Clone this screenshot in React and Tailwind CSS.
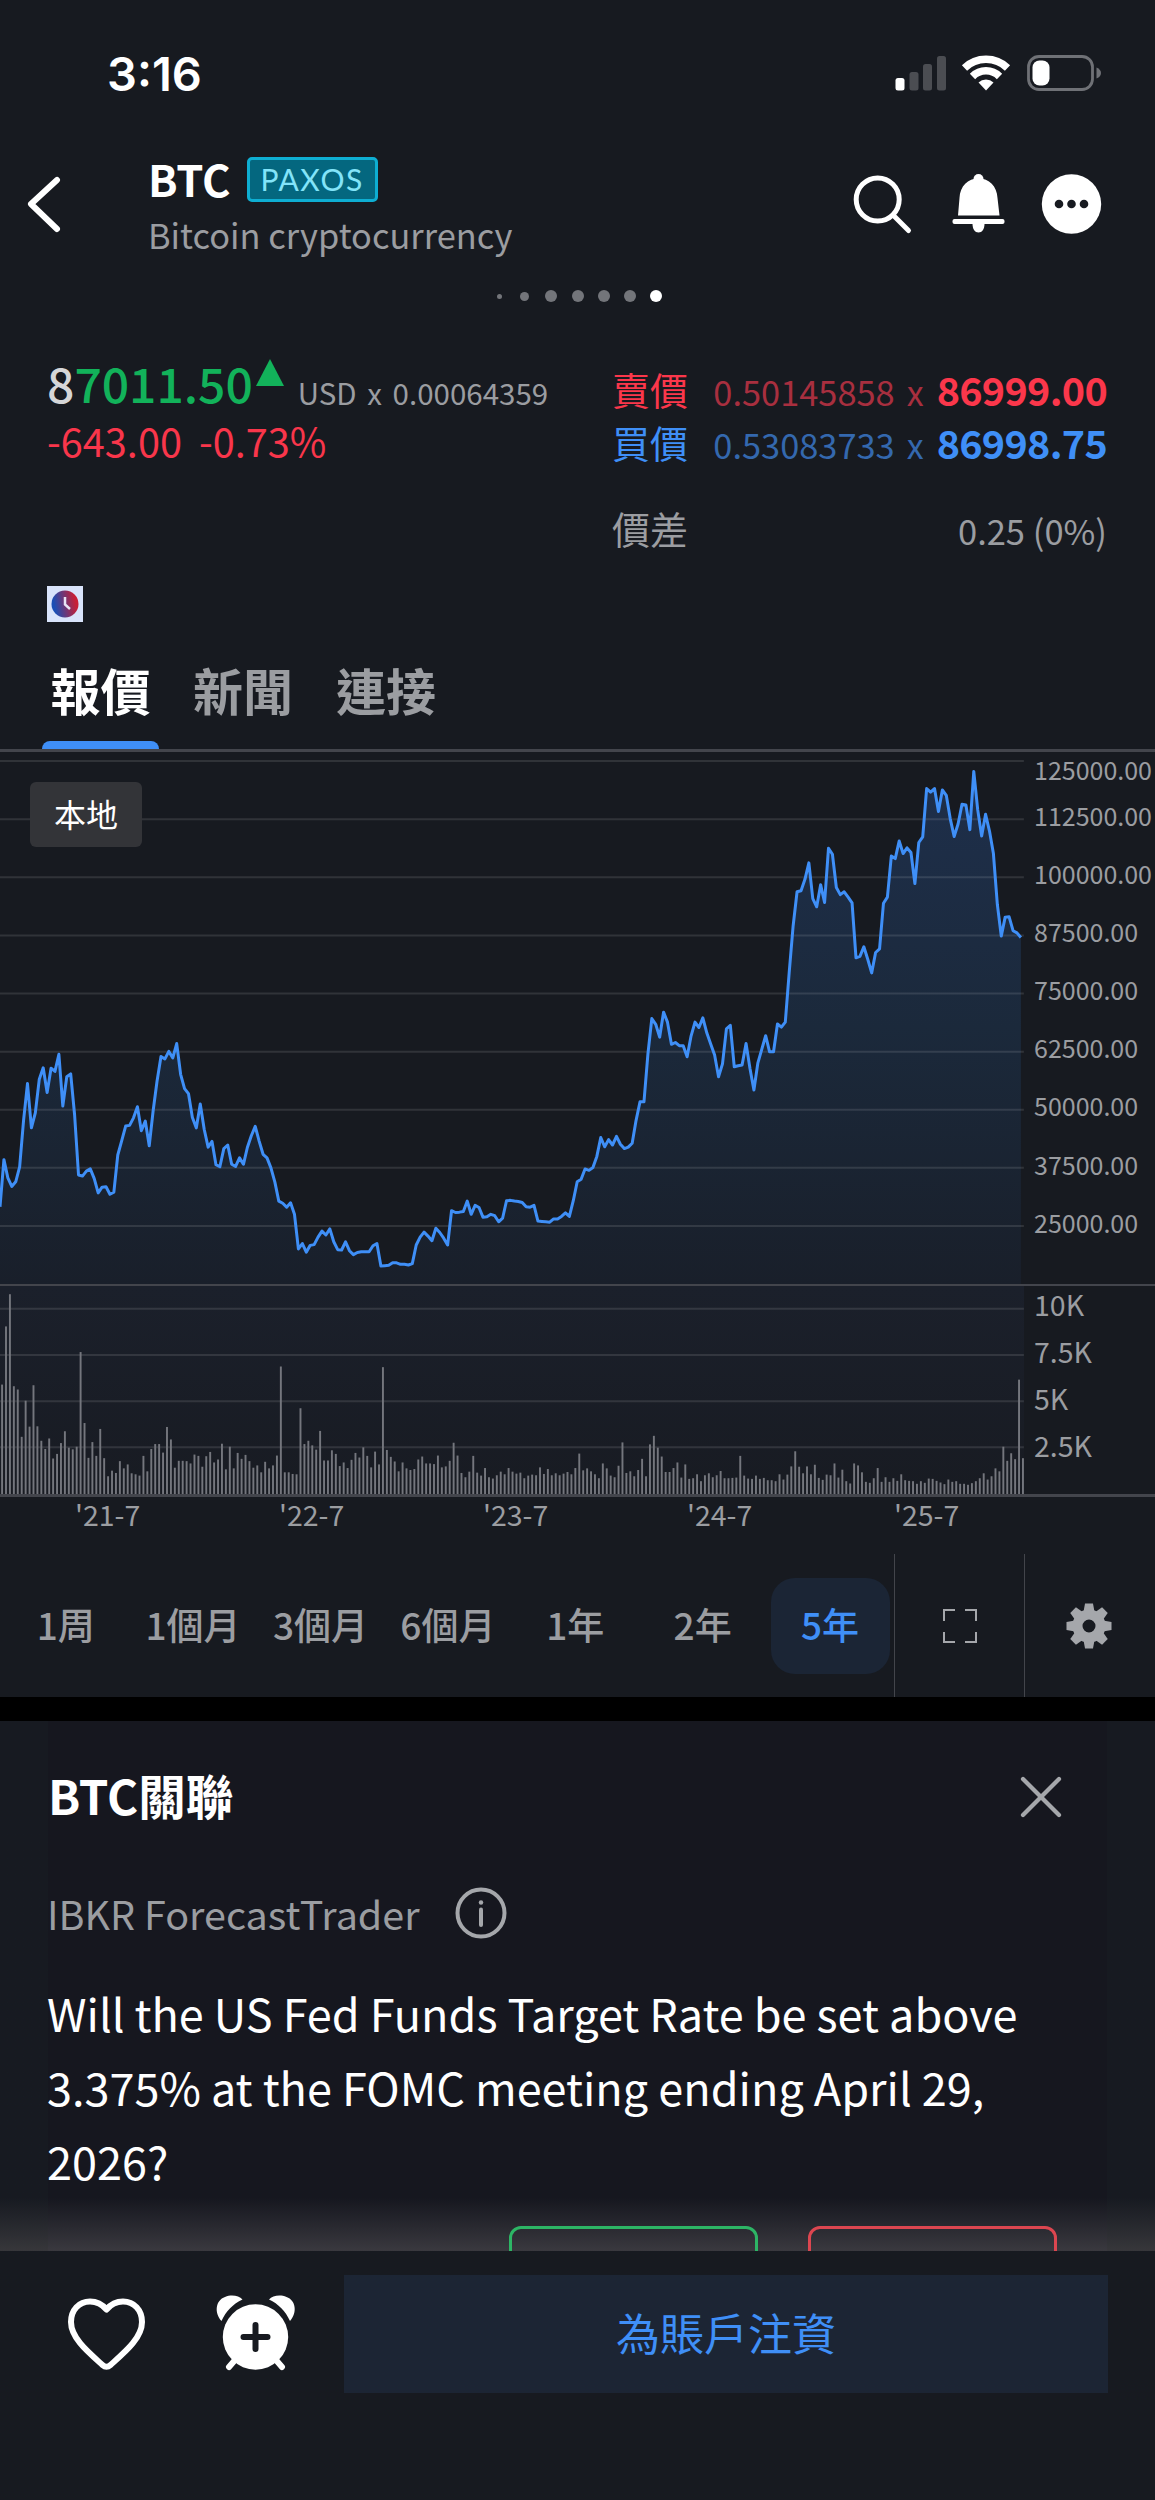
import { X } from 'lucide-react'

// weekly closes, in chart units (0 at the top of the plot)
const PRICE = [
  1307, 1175, 1226, 1250, 1237, 1195, 1065, 962, 1086, 1044, 950, 918, 987, 919, 928, 880, 1025, 943, 935, 1050,
  1218, 1221, 1207, 1201, 1228, 1268, 1252, 1251, 1272, 1266, 1162, 1122, 1081, 1079, 1058, 1027, 1094, 1067, 1136, 1038,
  955, 886, 893, 872, 890, 850, 936, 976, 990, 1057, 1086, 1019, 1090, 1140, 1124, 1189, 1195, 1144, 1134, 1188,
  1194, 1170, 1188, 1141, 1108, 1082, 1123, 1160, 1170, 1198, 1238, 1291, 1297, 1308, 1296, 1328, 1425, 1410, 1434, 1415,
  1413, 1392, 1375, 1386, 1369, 1405, 1427, 1428, 1405, 1430, 1441, 1435, 1433, 1433, 1433, 1416, 1410, 1473, 1472, 1471,
  1464, 1464, 1468, 1468, 1470, 1466, 1414, 1392, 1378, 1389, 1402, 1367, 1379, 1395, 1414, 1318, 1323, 1322, 1320, 1291,
  1328, 1303, 1309, 1336, 1335, 1328, 1332, 1349, 1339, 1290, 1289, 1291, 1292, 1295, 1307, 1308, 1303, 1347, 1348, 1349,
  1350, 1341, 1341, 1334, 1324, 1334, 1290, 1237, 1230, 1201, 1205, 1197, 1166, 1113, 1139, 1119, 1134, 1110, 1132, 1144,
  1140, 1129, 1065, 1013, 1013, 880, 780, 796, 832, 762, 790, 852, 847, 856, 856, 887, 829, 790, 805, 778,
  820, 851, 882, 943, 907, 809, 799, 915, 912, 910, 850, 920, 980, 905, 866, 828, 873, 873, 795, 804,
  790, 650, 520, 425, 422, 390, 344, 444, 467, 405, 455, 303, 320, 413, 433, 425, 440, 456, 610, 606,
  579, 614, 652, 595, 585, 457, 440, 325, 332, 283, 318, 302, 315, 402, 287, 271, 136, 146, 136, 200,
  140, 155, 220, 270, 235, 180, 182, 251, 88, 195, 269, 208, 255, 318, 460, 549, 496, 495, 534, 540, 553,
]

// top of each weekly volume bar, the baseline is at 678
const VOLUME = [
  345, 168, 70, 350, 360, 504, 394, 473, 347, 472, 516, 541, 509, 570, 556, 523, 487, 537, 542, 534,
  246, 462, 568, 520, 562, 480, 569, 624, 607, 614, 578, 600, 588, 615, 618, 622, 562, 609, 541, 526,
  526, 552, 474, 512, 598, 577, 577, 578, 585, 558, 562, 595, 563, 550, 582, 573, 525, 603, 534, 600,
  553, 571, 559, 578, 598, 591, 612, 580, 600, 591, 561, 290, 612, 612, 617, 618, 417, 526, 516, 530,
  543, 486, 576, 576, 545, 556, 593, 582, 599, 574, 553, 567, 536, 562, 597, 549, 588, 292, 544, 565,
  579, 609, 582, 600, 605, 602, 573, 564, 585, 585, 587, 561, 597, 594, 577, 522, 561, 614, 627, 610,
  562, 613, 622, 599, 627, 631, 621, 610, 618, 599, 610, 616, 613, 630, 622, 619, 621, 597, 617, 602,
  621, 615, 621, 616, 611, 618, 599, 555, 606, 600, 609, 618, 630, 585, 600, 622, 627, 592, 521, 614,
  609, 624, 605, 571, 624, 527, 501, 537, 564, 611, 611, 599, 582, 628, 588, 632, 630, 618, 639, 621,
  615, 627, 621, 608, 630, 630, 629, 628, 562, 622, 631, 632, 622, 632, 629, 636, 636, 639, 618, 634,
  619, 594, 548, 595, 615, 594, 618, 589, 629, 635, 619, 621, 585, 628, 604, 639, 646, 585, 591, 612,
  641, 644, 630, 599, 641, 627, 641, 630, 638, 618, 636, 638, 639, 647, 639, 644, 631, 632, 638, 643,
  648, 634, 641, 639, 647, 647, 650, 645, 639, 630, 615, 634, 624, 600, 609, 534, 577, 554, 572, 330, 569,
]

const PRICE_LABELS = ['112500.00', '100000.00', '87500.00', '75000.00', '62500.00', '50000.00', '37500.00', '25000.00']
const VOLUME_LABELS = ['10K', '7.5K', '5K', '2.5K']
const DATES = ["'21-7", "'22-7", "'23-7", "'24-7", "'25-7"]
const RANGES = ['1周', '1個月', '3個月', '6個月', '1年', '2年', '5年']

function StatusBar() {
  return (
    <div className="flex h-[146px] items-center justify-between pl-[107px] pr-[54px]">
      <span className="font-['Inter',sans-serif] text-[47px] font-semibold leading-none">3:16</span>
      <svg className="h-10 w-[206px]" viewBox="895 53 206 40" fill="#fff">
        <rect x="895.500" y="78" width="9" height="12.500" rx="2.500" />
        <g fill="#4b4d52">
          <rect x="909.500" y="72" width="9" height="18.500" rx="2.500" />
          <rect x="923" y="64" width="9" height="26.500" rx="2.500" />
          <rect x="937" y="56" width="9" height="34.500" rx="2.500" />
        </g>
        <g fill="none" stroke="#fff" strokeWidth="7.500">
          <path d="M964.500 68 A31 31 0 0 1 1007.500 68" />
          <path d="M972.500 76.500 A19 19 0 0 1 999.500 76.500" />
        </g>
        <path d="M986 90.500 L978.500 82.500 A11 11 0 0 1 993.500 82.500 Z" />
        <rect x="1028.500" y="56.500" width="64" height="33" rx="10.500" fill="none" stroke="#6f7176" strokeWidth="2.800" />
        <rect x="1032.500" y="60.500" width="17" height="25" rx="7" />
        <path d="M1096.500 67.500 q4.500 2 4.500 5.500 t-4.500 5.500 Z" fill="#6f7176" />
      </svg>
    </div>
  )
}

function Header() {
  return (
    <div className="flex h-[134px] pl-[27px] pr-[53px]">
      <svg className="mt-[29px] h-[60px] w-[36px]" viewBox="0 0 36 60" fill="none" stroke="#fff" strokeWidth="6" strokeLinecap="round" strokeLinejoin="round">
        <path d="M30 5 L4 29 L30 54" />
      </svg>
      <div className="ml-[85px] flex-1">
        <div className="mt-[8px] flex h-[50px] items-center">
          <span className="text-[43.5px] font-bold leading-[50px]">BTC</span>
          <span className="ml-4 flex h-[45px] w-[131px] items-center justify-center rounded-[5px] border-[3px] border-[#0eaed2] bg-[#04677f] font-['Lato',sans-serif] text-[30px] leading-none tracking-[1.5px] text-[#82e4f9]">
            PAXOS
          </span>
        </div>
        <p className="mt-[8px] text-[34.4px] leading-[44px] text-[#9b9da1]">Bitcoin cryptocurrency</p>
      </div>
      <svg className="mt-[28px] h-[62px] w-[250px]" viewBox="852 174 250 62">
        <g fill="none" stroke="#fff" strokeWidth="5" strokeLinecap="round">
          <circle cx="877.700" cy="199.500" r="21.500" />
          <path d="M893.500 215.500 L908.500 230.500" />
        </g>
        <g fill="#fff">
          <circle cx="978.500" cy="179" r="5" />
          <path d="M958 215.500 L959.500 198 C960 186 968 178.500 978.500 178.500 S997 186 997.500 198 L999.500 215.500 Z" />
          <rect x="952.500" y="219" width="52" height="5" rx="2" />
          <path d="M972.500 224 h12 c0 5 -2.500 8.500 -6 8.500 s-6 -3.500 -6 -8.500 Z" />
          <circle cx="1071.500" cy="204" r="29.700" />
        </g>
        <g fill="#171a20">
          <circle cx="1059" cy="204" r="4.300" />
          <circle cx="1071.500" cy="204" r="4.300" />
          <circle cx="1084" cy="204" r="4.300" />
        </g>
      </svg>
    </div>
  )
}

function PageDots() {
  return (
    <div className="flex h-8 items-center justify-center gap-[14.3px] pl-[4px] text-[#73757a]">
      <i className="mr-[4px] size-[5px] rounded-full bg-current" />
      <i className="mr-[2px] size-[9px] rounded-full bg-current" />
      <i className="size-3 rounded-full bg-current" />
      <i className="size-3 rounded-full bg-current" />
      <i className="size-3 rounded-full bg-current" />
      <i className="size-3 rounded-full bg-current" />
      <i className="size-3 rounded-full bg-white" />
    </div>
  )
}

function BidAsk({ label, size, price, color, dim }) {
  return (
    <div className={`flex h-[53px] items-center justify-between ${color}`}>
      <span className="text-[38px]">{label}</span>
      <span className="flex items-baseline">
        <span className={`text-[34.4px] ${dim}`}>{size}</span>
        <span className={`ml-3 text-[34px] ${dim}`}>x</span>
        <span className="ml-[13px] text-[39.5px] font-bold tracking-[-0.7px]">{price}</span>
      </span>
    </div>
  )
}

function Quote() {
  return (
    <div className="flex h-[274px] justify-between pl-[47px] pr-[48px] pt-[46px] leading-none">
      <div className="pt-[7px]">
        <div className="flex h-[58px] items-baseline">
          <span className="text-[48px] font-medium leading-[58px] text-[#12b25a]">
            <span className="text-[#d5d6d8]">8</span>7011.50
          </span>
          <svg className="ml-[3px] h-[27px] w-[28px] -translate-y-[17px]" viewBox="0 0 28 27">
            <path d="M14 0 L28 27 H0 Z" fill="#12b25a" />
          </svg>
          <span className="ml-[14px] translate-y-[2px] text-[29.5px] text-[#9b9da1] [word-spacing:4px]">USD x 0.00064359</span>
        </div>
        <p className="mt-1 flex gap-[17px] text-[39.7px] leading-[50px] text-[#f9364b]">
          <span>-643.00</span>
          <span>-0.73%</span>
        </p>
        <div className="mt-[121px] flex size-9 items-center justify-center bg-[#d9e4fb]">
          <svg className="size-7" viewBox="0 0 28 28">
            <defs>
              <linearGradient id="clock" x1="0" y1="0.600" x2="1" y2="0.400">
                <stop offset="0.100" stopColor="#1a4fb5" />
                <stop offset="0.900" stopColor="#c81e35" />
              </linearGradient>
            </defs>
            <circle cx="14" cy="14" r="13.500" fill="url(#clock)" />
            <path d="M14 7 V14.500 L19 19" fill="none" stroke="#e8e4f5" strokeWidth="2.500" />
          </svg>
        </div>
      </div>
      <div className="w-[495px] pt-[16px]">
        <BidAsk label="賣價" size="0.50145858" price="86999.00" color="text-[#fb374b]" dim="text-[#a82f3f]" />
        <BidAsk label="買價" size="0.53083733" price="86998.75" color="text-[#3f8ff7]" dim="text-[#3468ae]" />
        <div className="mt-[33px] flex h-[53px] items-center justify-between text-[#9b9da1]">
          <span className="text-[38px]">價差</span>
          <span className="mt-[6px] text-[34.5px]">0.25 (0%)</span>
        </div>
      </div>
    </div>
  )
}

function Tabs() {
  return (
    <div className="flex h-[112px] border-b-3 border-[#43454c] pl-[42px] text-[50px] font-bold leading-[80px] text-[#9b9da1]">
      <div className="flex w-[117px] flex-col justify-between text-center text-white">
        <span className="mt-[9px]">報價</span>
        <i className="h-2 rounded-t-[10px] bg-[#3f8ff7]" />
      </div>
      <span className="ml-[34px] mt-[9px]">新聞</span>
      <span className="ml-[43px] mt-[9px]">連接</span>
    </div>
  )
}

function PriceChart() {
  const points = PRICE.map((y, i) => `${(i * 10.615).toFixed(1)},${y}`).join(' ')
  return (
    <div className="relative flex h-[532px]">
      <svg className="h-full w-[1024px]" viewBox="0 33.6 2768.3 1489.6" preserveAspectRatio="none">
        <defs>
          <linearGradient id="area" x1="0" y1="0" x2="0" y2="1">
            <stop offset="0" stopColor="#1e2f4b" />
            <stop offset="0.500" stopColor="#1b293b" />
            <stop offset="1" stopColor="#191f2a" />
          </linearGradient>
        </defs>
        <polygon points={`0,1524 ${points} 2760,1524`} fill="url(#area)" />
        {[59, 222, 384.500, 547.500, 710, 873, 1035.500, 1198, 1361].map(y => (
          <path key={y} d={`M0 ${y} H2768`} stroke="#fff" strokeOpacity="0.11" strokeWidth="2" vectorEffect="non-scaling-stroke" />
        ))}
        <polyline points={points} fill="none" stroke="#3f8ff7" strokeWidth="3" strokeLinejoin="round" vectorEffect="non-scaling-stroke" />
      </svg>
      <div className="flex flex-col pl-[10px] text-[25px] text-[#9b9da1]">
        <span className="h-[35px] leading-[34px]">125000.00</span>
        {PRICE_LABELS.map(label => (
          <span key={label} className="h-[58.1px] leading-[57px]">{label}</span>
        ))}
      </div>
      <div className="absolute left-[30px] top-[30px] flex h-[65px] w-[112px] items-center justify-center rounded-md bg-[#333438] pb-1 text-[32px] leading-none">
        本地
      </div>
    </div>
  )
}

function VolumeChart() {
  return (
    <div className="flex h-[213px] border-b-[3px] border-t-2 border-[#43454c]">
      <svg className="h-full w-[1024px] bg-linear-to-b from-[#1b202b] to-[#181b22]" viewBox="0 45 2768.3 633" preserveAspectRatio="none">
        {[114, 255, 396, 536].map(y => (
          <path key={y} d={`M0 ${y} H2768`} stroke="#fff" strokeOpacity="0.11" strokeWidth="2" vectorEffect="non-scaling-stroke" />
        ))}
        {VOLUME.map((y, i) => (
          <rect key={i} x={3 + i * 10.615} y={y} width="5.200" height={679 - y} fill="#74767d" />
        ))}
      </svg>
      <div className="flex flex-col pl-[10px] text-[28.5px] text-[#9b9da1]">
        {VOLUME_LABELS.map(label => (
          <span key={label} className="h-[47px] leading-[36px]">{label}</span>
        ))}
      </div>
    </div>
  )
}

function RangeBar() {
  return (
    <div className="flex h-[143px] text-[37px] font-medium text-[#9b9da1]">
      <div className="flex w-[894px] items-center pl-[2px]">
        {RANGES.map(range => (
          <div key={range} className="flex w-[127.4px] justify-center">
            <span
              className={
                range === '5年'
                  ? 'flex h-24 w-[119px] items-center justify-center rounded-[24px] bg-[#1b2535] pb-[2px] text-[#3f8ff7]'
                  : 'flex h-24 items-center whitespace-nowrap pb-[2px]'
              }
            >
              {range}
            </span>
          </div>
        ))}
      </div>
      <div className="flex w-[131px] items-center justify-center border-x border-[#43454b]">
        <svg className="size-[34px]" viewBox="0 0 34 34" fill="none" stroke="#a5a7ab" strokeWidth="2">
          <path d="M12 1 H1 V12 M22 1 H33 V12 M1 23 V33 H12 M33 23 V33 H22" />
        </svg>
      </div>
      <div className="flex flex-1 items-center justify-center pr-[2px]">
        <svg className="size-[46px]" viewBox="-23 -23 46 46" fill="#a5a7ab">
          {[0, 45, 90, 135, 180, 225, 270, 315].map(angle => (
            <path key={angle} d="M-5.500 -14 L-4 -22.500 H4 L5.500 -14 Z" transform={`rotate(${angle})`} />
          ))}
          <circle r="11.500" fill="none" stroke="#a5a7ab" strokeWidth="10" />
        </svg>
      </div>
    </div>
  )
}

function Forecast() {
  return (
    <div className="h-[530px] overflow-hidden bg-linear-to-b from-[#171a21] from-90% to-[#37373b] px-[48px]">
      <div className="h-full bg-linear-to-b from-[#16171f] from-90% to-[#3a393f]">
        <div className="flex h-[152px] items-center justify-between pr-[30px]">
          <h2 className="pb-[5px] text-[47.5px] font-bold leading-none">BTC關聯</h2>
          <X size={72} strokeWidth={1.4} color="#a5a7ab" />
        </div>
        <div className="-ml-px flex h-[80px] items-center text-[#9b9da1]">
          <span className="pb-px text-[39.5px] leading-none">IBKR ForecastTrader</span>
          <svg className="ml-[35px] size-[52px]" viewBox="0 0 52 52" fill="none" stroke="#a5a7ab" strokeLinecap="round">
            <circle cx="26" cy="26" r="23.500" strokeWidth="4" />
            <path d="M26 22.500 V38" strokeWidth="4" />
            <path d="M26 15.500 V15.600" strokeWidth="4.500" />
          </svg>
        </div>
        <p className="-ml-px mt-[23px] w-[1040px] whitespace-pre-line text-[45px] leading-[74px]">
          {'Will the US Fed Funds Target Rate be set above\n3.375% at the FOMC meeting ending April 29,\n2026?'}
        </p>
        <div className="mt-[28px] flex justify-end gap-[50px] pr-[50px]">
          <span className="h-20 w-[249px] rounded-[12px] border-[3px] border-[#2db565]" />
          <span className="h-20 w-[249px] rounded-[12px] border-[3px] border-[#dc4650]" />
        </div>
      </div>
    </div>
  )
}

function ActionBar() {
  return (
    <div className="flex h-[249px] pl-[64px] pr-[47px] pt-[24px]">
      <svg className="h-[118px] w-[236px]" viewBox="64 2275 236 118">
        <path
          d="M106.500 2309.500 C101.500 2303.500 95.500 2301.500 90 2301.500 C79 2301.500 71 2310 71 2322 C71 2338 88 2352 102.500 2365 Q106.500 2368.500 110.500 2365 C125 2352 142 2338 142 2322 C142 2310 134 2301.500 123 2301.500 C117.500 2301.500 111.500 2303.500 106.500 2309.500 Z"
          fill="none"
          stroke="#fff"
          strokeWidth="6"
          strokeLinejoin="round"
        />
        <g fill="#fff">
          <circle cx="255.500" cy="2337" r="32.700" />
          <path d="M221.500 2321 C214 2313 215.500 2300 225 2297 C232 2294 239 2296 242.500 2299.500 C233 2304 226 2311 221.500 2321 Z" />
          <path d="M290 2321 C297.500 2313 296 2300 286.500 2297 C279.500 2294 272.500 2296 269 2299.500 C278.500 2304 285.500 2311 290 2321 Z" />
        </g>
        <path d="M235 2360 L229 2367 M276 2360 L282 2367" stroke="#fff" strokeWidth="6" strokeLinecap="round" />
        <path d="M255.500 2325 V2349 M243.500 2337 H267.500" stroke="#171a20" strokeWidth="6" strokeLinecap="round" />
      </svg>
      <button className="ml-[44px] flex h-[118px] flex-1 items-center justify-center bg-[#1c2534] pb-1 text-[44px] leading-none text-[#3f8ff7]">
        為賬戶注資
      </button>
    </div>
  )
}

export default function App() {
  return (
    <div className="h-[2500px] w-[1155px] overflow-hidden bg-[#171a20] font-['Noto_Sans_CJK_TC',sans-serif] text-white">
      <StatusBar />
      <Header />
      <PageDots />
      <div className="-mt-[12px]">
        <Quote />
      </div>
      <div className="pt-[66px]">
        <Tabs />
      </div>
      <PriceChart />
      <VolumeChart />
      <div className="flex h-[57px] gap-[141px] whitespace-nowrap pl-[75px] text-[28.5px] leading-[33px] text-[#9b9da1]">
        {DATES.map(date => (
          <span key={date} className="w-[63px] last:ml-[3px]">{date}</span>
        ))}
      </div>
      <RangeBar />
      <div className="h-6 bg-black" />
      <Forecast />
      <ActionBar />
    </div>
  )
}
